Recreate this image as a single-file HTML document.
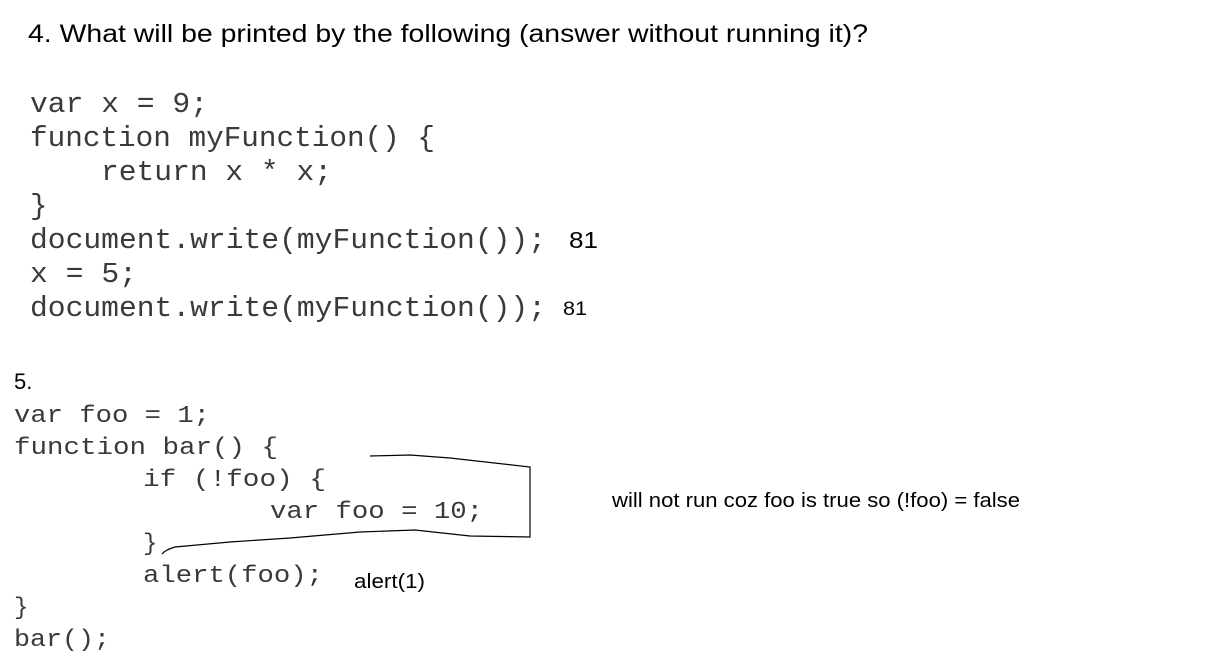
<!DOCTYPE html>
<html><head><meta charset="utf-8"><style>
html,body{margin:0;padding:0;background:#fff;width:1210px;height:665px;overflow:hidden}
svg{display:block}
.m{font-family:"Liberation Mono",monospace;fill:#3a3a3a;white-space:pre}
.s{font-family:"Liberation Sans",sans-serif;fill:#000}
</style></head><body>
<svg width="1210" height="665" viewBox="0 0 1210 665" xml:space="preserve">
<text class="s" x="28" y="42" font-size="25" textLength="840" lengthAdjust="spacingAndGlyphs">4.  What will be printed by the following (answer without running it)?</text>
<g class="m" font-size="29">
<text x="30" y="112" textLength="178" lengthAdjust="spacingAndGlyphs">var x = 9;</text>
<text x="30" y="146" textLength="405" lengthAdjust="spacingAndGlyphs">function myFunction() {</text>
<text x="101" y="180" textLength="231" lengthAdjust="spacingAndGlyphs">return x * x;</text>
<text x="30" y="214">}</text>
<text x="30" y="248" textLength="516" lengthAdjust="spacingAndGlyphs">document.write(myFunction());</text>
<text x="30" y="282" textLength="107" lengthAdjust="spacingAndGlyphs">x = 5;</text>
<text x="30" y="316" textLength="516" lengthAdjust="spacingAndGlyphs">document.write(myFunction());</text>
</g>
<text class="s" x="569" y="248" font-size="23" textLength="29" lengthAdjust="spacingAndGlyphs">81</text>
<text class="s" x="563" y="315" font-size="19" textLength="24" lengthAdjust="spacingAndGlyphs">81</text>
<text class="s" x="14" y="389" font-size="22">5.</text>
<g class="m" font-size="24">
<text x="14" y="422" textLength="196" lengthAdjust="spacingAndGlyphs">var foo = 1;</text>
<text x="14" y="454" textLength="264" lengthAdjust="spacingAndGlyphs">function bar() {</text>
<text x="143" y="486" textLength="183" lengthAdjust="spacingAndGlyphs">if (!foo) {</text>
<text x="270" y="518" textLength="213" lengthAdjust="spacingAndGlyphs">var foo = 10;</text>
<text x="143" y="550">}</text>
<text x="143" y="582" textLength="180" lengthAdjust="spacingAndGlyphs">alert(foo);</text>
<text x="14" y="614">}</text>
<text x="14" y="646" textLength="96" lengthAdjust="spacingAndGlyphs">bar();</text>
</g>
<text class="s" x="354" y="588" font-size="20" textLength="71" lengthAdjust="spacingAndGlyphs">alert(1)</text>
<text class="s" x="612" y="507" font-size="20" textLength="408" lengthAdjust="spacingAndGlyphs">will not run coz foo is true so (!foo) = false</text>
<path d="M370 456 L410 455 L450 458 L530 467 L530 537 L470 536 L415 530 L360 532 L290 538 L230 542 L175 547 Q165 550 162 554" fill="none" stroke="#000" stroke-width="1.2"/>
</svg>
</body></html>
